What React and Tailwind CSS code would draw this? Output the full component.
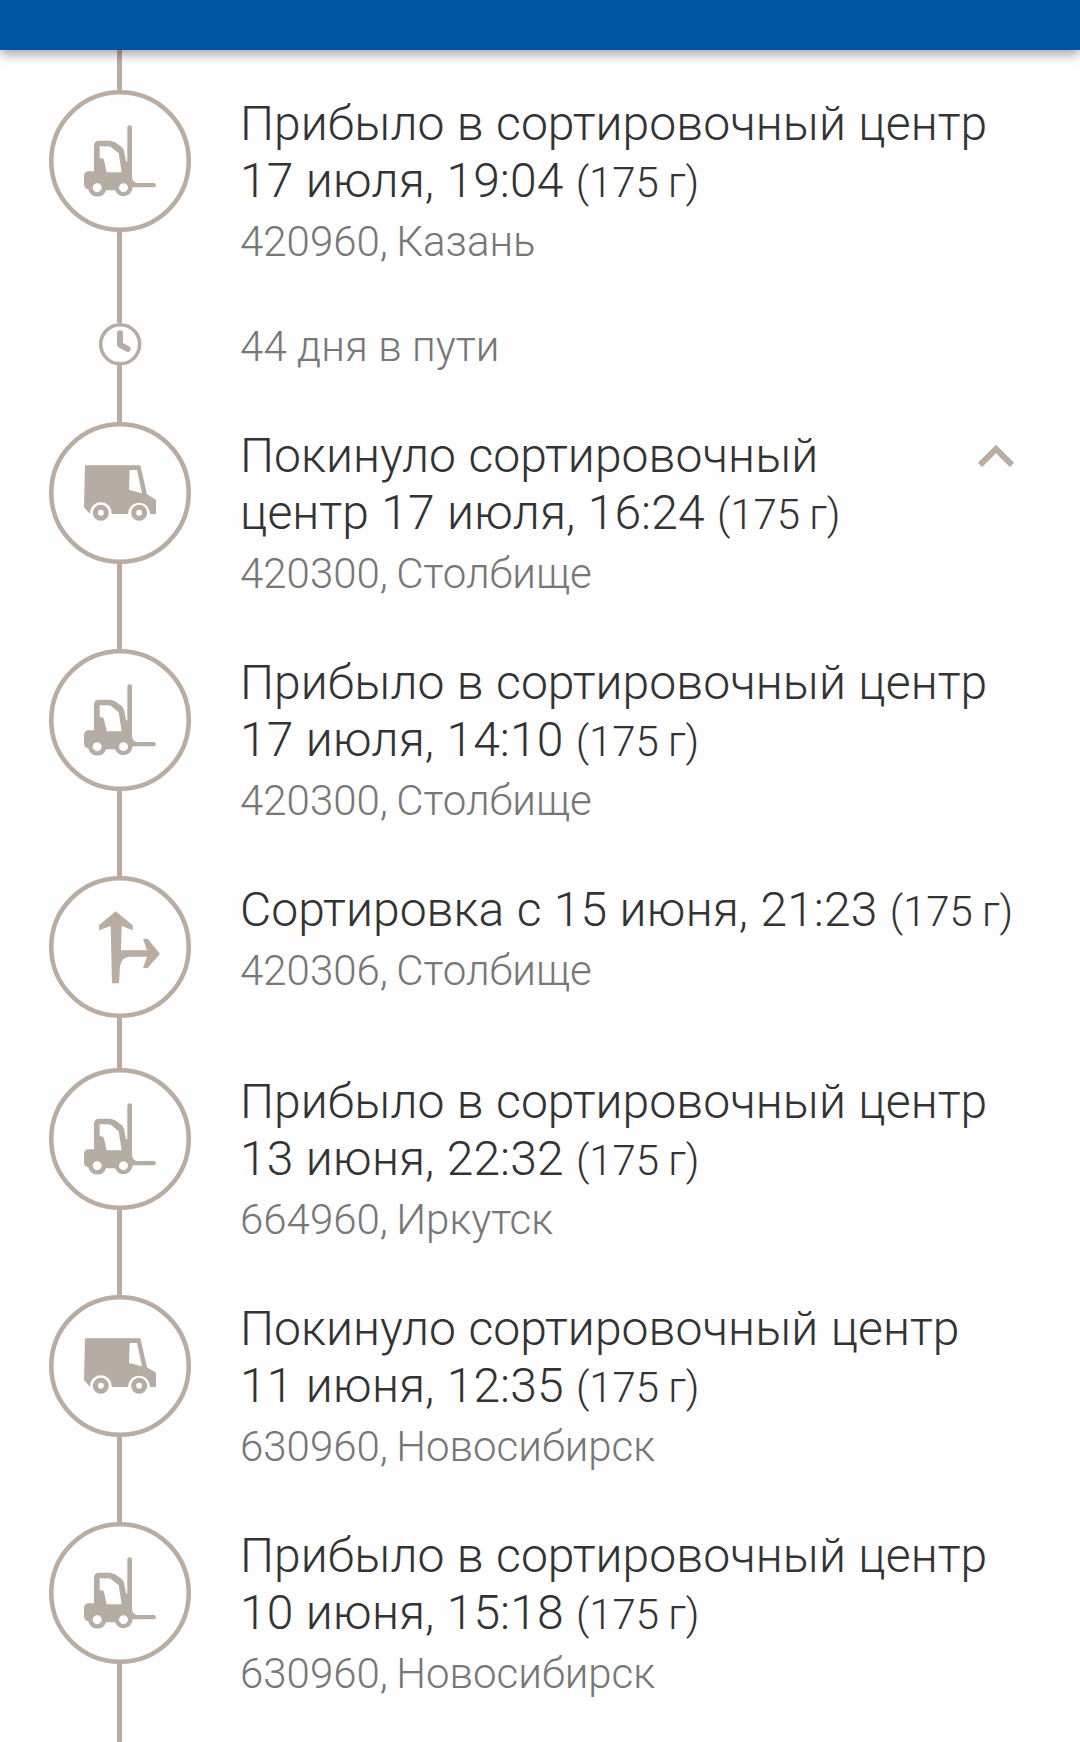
import React from "react";

const ring = "#b9aca1";
const ink = "#b5aca3";

function Forklift() {
  return (
    <svg viewBox="147 269 426 426" className="block h-[142px] w-[142px] shrink-0">
      <circle cx="360" cy="482" r="206.2" fill="none" stroke={ring} strokeWidth="13.5" />
      <path
        fill={ink}
        fillRule="evenodd"
        d="M252 528 Q252 513 267 513 L282 513 L282 437 Q282 421 298 421 L328 421 Q337 421 345 426 L365 440 Q370 444 372 452 L378 483 L382 483 L382 382 A7 7 0 0 1 396 382 L396 531 Q398 547 412 548 L461 548 A6.5 6.5 0 0 1 461 561 L398 561 A27.5 27.5 0 0 1 345 570 L318 570 A27.5 27.5 0 0 1 265 567 Q252 566 252 552 Z M299 438 L299 474 L305 474 Q310 474 312 480 L320 516 L365 516 L356 459 L334 441 Q330 438 325 438 Z M278 562 a13.5 13.5 0 1 0 27 0 a13.5 13.5 0 1 0 -27 0 Z M357 562 a13.5 13.5 0 1 0 27 0 a13.5 13.5 0 1 0 -27 0 Z"
      />
    </svg>
  );
}

function Truck() {
  return (
    <svg viewBox="57 366 426 426" className="block h-[142px] w-[142px] shrink-0">
      <circle cx="270" cy="579" r="206.2" fill="none" stroke={ring} strokeWidth="13.5" />
      <path
        fill={ink}
        fillRule="evenodd"
        d="M165 496 L331 496 L351 583 L378 599 L378 642 L360 642 L358 631 A32.5 32.5 0 0 0 296 631 L294 642 L245 642 L244 631 A32.5 32.5 0 0 0 181 631 L180 641 L162 622 Z M299 510 L297 570 L336 580 L321 510 Z"
      />
      <circle cx="212.500" cy="638.500" r="16.500" fill="none" stroke={ink} strokeWidth="15" />
      <circle cx="327.500" cy="638.500" r="16.500" fill="none" stroke={ink} strokeWidth="15" />
    </svg>
  );
}

function Sorting() {
  return (
    <svg viewBox="57 47 426 426" className="block h-[142px] w-[142px] shrink-0">
      <circle cx="270" cy="260" r="206.2" fill="none" stroke={ring} strokeWidth="13.5" />
      <path
        fill={ring}
        d="M257 153 L308 195 L308 210 L275 197 L273 270 L351 270 L339 235 L353 235 L390 280 L353 323 L339 323 L351 289 L300 289 Q274 290 270 318 L267 369 L246 369 L242 197 L207 210 L207 195 Z"
      />
    </svg>
  );
}

function Clock() {
  return (
    <svg viewBox="208 69 129 129" className="-mb-px block h-[43px] w-[43px] shrink-0">
      <circle cx="271.500" cy="133" r="58.500" fill="none" stroke={ink} strokeWidth="10.500" />
      <path d="M271 100 V134 L294 147" fill="none" stroke={ink} strokeWidth="18" strokeLinecap="round" strokeLinejoin="round" />
    </svg>
  );
}

const icons = { forklift: Forklift, truck: Truck, sorting: Sorting };

function Line({ className = "flex-1" }) {
  return <div className={`mr-px w-[5px] bg-[#b9aca1] ${className}`} />;
}

function Event({ icon, lines, place, height = "h-[227px]", expandable }) {
  const Icon = icons[icon];
  return (
    <li className={`flex ${height}`}>
      <div className="flex w-60 shrink-0 flex-col items-center">
        <Icon />
        <Line />
      </div>
      <div className="min-w-0 flex-1 pt-[5px]">
        <h2 className="text-[48px] leading-[57px] tracking-[0.06px] text-[#333333] [word-spacing:0.6px]">
          {lines.map((line, i) => (
            <span key={line} className="block whitespace-nowrap">
              {line}
              {i === lines.length - 1 && (
                <>
                  {" "}
                  <span className="text-[42px] leading-none tracking-[-0.1px] [word-spacing:-0.8px]">(175 г)</span>
                </>
              )}
            </span>
          ))}
        </h2>
        <p className="mt-2 text-[42px] leading-[49px] whitespace-nowrap text-[#777777] [word-spacing:-1.8px]">{place}</p>
      </div>
      {expandable && (
        <svg viewBox="0 0 36 22" className="mt-[23px] mr-[66px] h-[22px] w-9 shrink-0">
          <path d="M2 20 L18 4 L34 20" fill="none" stroke={ring} strokeWidth="6" />
        </svg>
      )}
    </li>
  );
}

export default function App() {
  return (
    <div className="flex h-[1742px] w-[1080px] flex-col overflow-hidden bg-[#fefefe] font-['Roboto',sans-serif] font-light">
      <header className="relative z-10 h-[50px] shrink-0 bg-[#0055a2] shadow-[0_5px_10px_rgba(0,0,0,0.32)]" />
      <main className="shrink-0">
        <div className="flex w-60 justify-center">
          <Line className="h-[40px]" />
        </div>
        <ul>
          <Event icon="forklift" height="h-[233px]" lines={["Прибыло в сортировочный центр", "17 июля, 19:04"]} place="420960, Казань" />
          <li className="flex h-[99px]">
            <div className="flex w-60 shrink-0 flex-col items-center">
              <Clock />
              <Line />
            </div>
            <p className="-mt-px text-[42px] leading-[49px] tracking-[0.08px] text-[#777777]">44 дня в пути</p>
          </li>
          <Event icon="truck" expandable lines={["Покинуло сортировочный", "центр 17 июля, 16:24"]} place="420300, Столбище" />
          <Event icon="forklift" lines={["Прибыло в сортировочный центр", "17 июля, 14:10"]} place="420300, Столбище" />
          <Event icon="sorting" height="h-[192px]" lines={["Сортировка с 15 июня, 21:23"]} place="420306, Столбище" />
          <Event icon="forklift" lines={["Прибыло в сортировочный центр", "13 июня, 22:32"]} place="664960, Иркутск" />
          <Event icon="truck" lines={["Покинуло сортировочный центр", "11 июня, 12:35"]} place="630960, Новосибирск" />
          <Event icon="forklift" lines={["Прибыло в сортировочный центр", "10 июня, 15:18"]} place="630960, Новосибирск" />
        </ul>
      </main>
    </div>
  );
}
